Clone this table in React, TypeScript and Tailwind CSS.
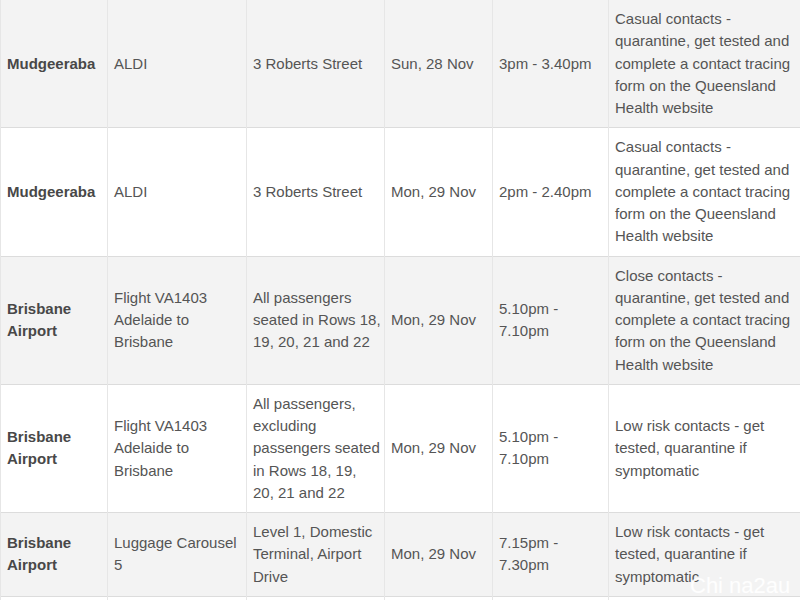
type Row = {
  suburb: string
  place: string
  address: string
  date: string
  time: string
  action: string
}

const rows: Row[] = [
  {
    suburb: 'Mudgeeraba',
    place: 'ALDI',
    address: '3 Roberts Street',
    date: 'Sun, 28 Nov',
    time: '3pm - 3.40pm',
    action:
      'Casual contacts - quarantine, get tested and complete a contact tracing form on the Queensland Health website',
  },
  {
    suburb: 'Mudgeeraba',
    place: 'ALDI',
    address: '3 Roberts Street',
    date: 'Mon, 29 Nov',
    time: '2pm - 2.40pm',
    action:
      'Casual contacts - quarantine, get tested and complete a contact tracing form on the Queensland Health website',
  },
  {
    suburb: 'Brisbane Airport',
    place: 'Flight VA1403 Adelaide to Brisbane',
    address: 'All passengers seated in Rows 18, 19, 20, 21 and 22',
    date: 'Mon, 29 Nov',
    time: '5.10pm - 7.10pm',
    action:
      'Close contacts - quarantine, get tested and complete a contact tracing form on the Queensland Health website',
  },
  {
    suburb: 'Brisbane Airport',
    place: 'Flight VA1403 Adelaide to Brisbane',
    address: 'All passengers, excluding passengers seated in Rows 18, 19, 20, 21 and 22',
    date: 'Mon, 29 Nov',
    time: '5.10pm - 7.10pm',
    action: 'Low risk contacts - get tested, quarantine if symptomatic',
  },
  {
    suburb: 'Brisbane Airport',
    place: 'Luggage Carousel 5',
    address: 'Level 1, Domestic Terminal, Airport Drive',
    date: 'Mon, 29 Nov',
    time: '7.15pm - 7.30pm',
    action: 'Low risk contacts - get tested, quarantine if symptomatic',
  },
  {
    suburb: 'Brisbane Airport',
    place: 'Qantas Club',
    address: 'Domestic Terminal',
    date: 'Mon, 29 Nov',
    time: '7.30pm - 8pm',
    action: 'Low risk contacts - get tested, quarantine if symptomatic',
  },
]

const cell =
  'border-x border-[#e6e6e6] pl-[6px] pr-[3px] py-2 align-middle text-left leading-[22.25px]'

export default function App() {
  return (
    <div className="relative w-[800px] bg-white font-['Liberation_Sans',Arial,sans-serif] text-[15px] text-[#555]">
      <table className="w-[800px] table-fixed border-collapse">
        <colgroup>
          <col className="w-[107px]" />
          <col className="w-[139px]" />
          <col className="w-[138px]" />
          <col className="w-[108px]" />
          <col className="w-[116px]" />
          <col className="w-[192px]" />
        </colgroup>
        <tbody>
          {rows.map((r, i) => (
            <tr
              key={i}
              className={i % 2 === 0 ? 'border-b border-[#dcdcdc] bg-[#f3f3f3]' : 'border-b border-[#dcdcdc] bg-white'}
            >
              <td className={cell + ' font-bold text-[#484848]'}>{r.suburb}</td>
              <td className={cell}>{r.place}</td>
              <td className={cell}>{r.address}</td>
              <td className={cell}>{r.date}</td>
              <td className={cell}>{r.time}</td>
              <td className={cell}>{r.action}</td>
            </tr>
          ))}
        </tbody>
      </table>

      {/* watermark */}
      <div className="pointer-events-none absolute left-[690px] top-[575px] whitespace-nowrap font-['Liberation_Sans',Arial,sans-serif] text-[22px] leading-none text-white/90">
        Chi na2au
      </div>
    </div>
  )
}
